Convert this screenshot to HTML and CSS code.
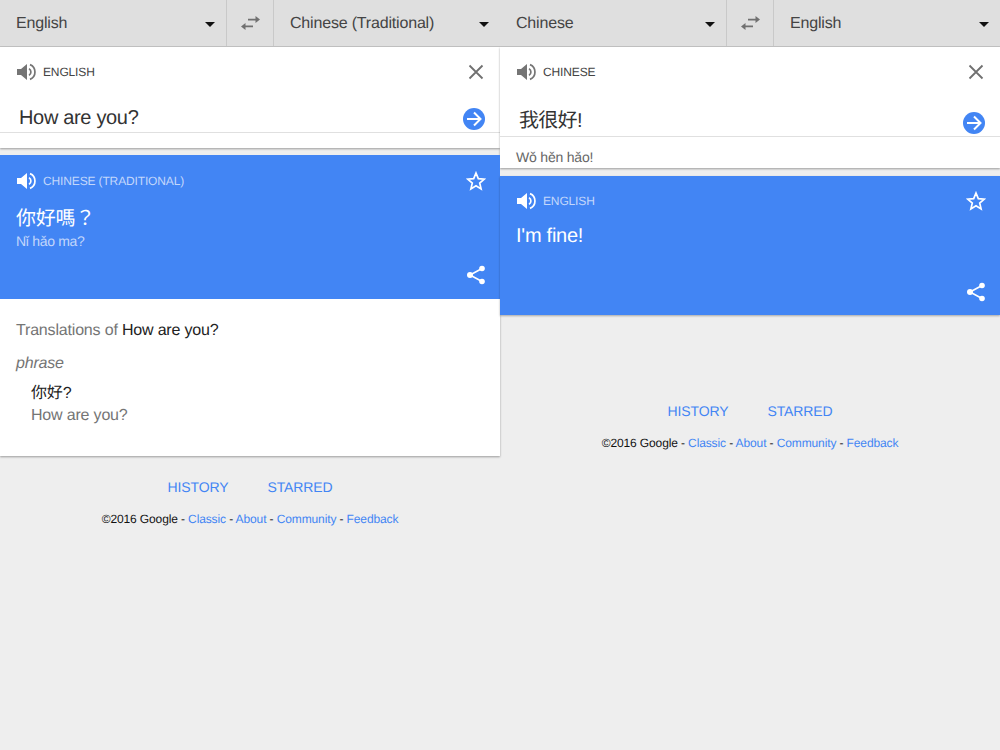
FILE: index.html
```html
<!DOCTYPE html>
<html lang="en">
<head>
  <meta charset="UTF-8">
  <title>Google Translate</title>
  <link rel="stylesheet" href="styles.css">
</head>
<body>
  <svg class="icon-defs" width="0" height="0">
    <symbol id="i-speaker" viewBox="0 0 20 20">
      <path fill="currentColor" d="M1 7h4l6-5v16l-6-5H1z"/>
      <path fill="none" stroke="currentColor" stroke-width="1.7" d="M13 6.600a4 4 0 0 1 0 6.800M14 2.600a8 8 0 0 1 0 14.800"/>
    </symbol>
    <symbol id="i-swap" viewBox="0 0 19 14">
      <path fill="currentColor" d="M7 2.700h7.500V0L19 3.500 14.500 7V4.500H7zM12 9.500H4.500V7L0 10.500 4.500 14v-2.700H12z"/>
    </symbol>
    <symbol id="i-close" viewBox="0 0 16 16">
      <path fill="none" stroke="currentColor" stroke-width="1.8" d="M1.500 1.500l13 13M14.500 1.500l-13 13"/>
    </symbol>
    <symbol id="i-go" viewBox="0 0 22 22">
      <circle cx="11" cy="11" r="11" fill="#4285f4"/>
      <path fill="none" stroke="#fff" stroke-width="2" d="M4 11h13M11 4.500l6.500 6.500-6.500 6.500"/>
    </symbol>
    <symbol id="i-star" viewBox="0 0 20 20">
      <path fill="none" stroke="currentColor" stroke-width="1.7" stroke-linejoin="miter" d="M10 2l2.300 5.600 6 .5-4.600 3.900 1.400 5.900L10 14.800l-5.100 3.100 1.400-5.900L1.700 8.100l6-.5z"/>
    </symbol>
    <symbol id="i-share" viewBox="0 0 20 20">
      <path fill="none" stroke="currentColor" stroke-width="1.6" d="M16 3.500L4 10l12 6.500"/>
      <circle cx="16" cy="3.500" r="2.800" fill="currentColor"/>
      <circle cx="4" cy="10" r="3" fill="currentColor"/>
      <circle cx="16" cy="16.500" r="2.800" fill="currentColor"/>
    </symbol>
  </svg>

  <div class="screens">
    <!-- left screen -->
    <section class="screen">
      <div class="lang-bar">
        <div class="lang-select"><span>English</span><i class="caret"></i></div>
        <div class="swap"><svg class="swap-icon"><use href="#i-swap"/></svg></div>
        <div class="lang-select"><span>Chinese (Traditional)</span><i class="caret"></i></div>
      </div>

      <div class="input-card">
        <div class="card-head">
          <svg class="speaker"><use href="#i-speaker"/></svg>
          <span class="lang-label">ENGLISH</span>
          <svg class="close"><use href="#i-close"/></svg>
        </div>
        <div class="input-row">
          <span class="input-text">How are you?</span>
          <svg class="go"><use href="#i-go"/></svg>
        </div>
        <div class="input-pad"></div>
      </div>

      <div class="result-card result-left">
        <div class="card-head">
          <svg class="speaker"><use href="#i-speaker"/></svg>
          <span class="lang-label">CHINESE (TRADITIONAL)</span>
          <svg class="star"><use href="#i-star"/></svg>
        </div>
        <div class="result-text">你好嗎？</div>
        <div class="result-roman">Nǐ hǎo ma?</div>
        <svg class="share"><use href="#i-share"/></svg>
      </div>

      <div class="dict-card">
        <div class="dict-title">Translations of <b>How are you?</b></div>
        <div class="dict-pos">phrase</div>
        <div class="dict-word">你好?</div>
        <div class="dict-gloss">How are you?</div>
      </div>

      <div class="links links-left">
        <a href="#">HISTORY</a>
        <a href="#">STARRED</a>
      </div>
      <div class="legal">©2016 Google - <a href="#">Classic</a> - <a href="#">About</a> - <a href="#">Community</a> - <a href="#">Feedback</a></div>
    </section>

    <!-- right screen -->
    <section class="screen">
      <div class="lang-bar">
        <div class="lang-select"><span>Chinese</span><i class="caret"></i></div>
        <div class="swap"><svg class="swap-icon"><use href="#i-swap"/></svg></div>
        <div class="lang-select"><span>English</span><i class="caret"></i></div>
      </div>

      <div class="input-card">
        <div class="card-head">
          <svg class="speaker"><use href="#i-speaker"/></svg>
          <span class="lang-label">CHINESE</span>
          <svg class="close"><use href="#i-close"/></svg>
        </div>
        <div class="input-row input-row-cjk">
          <span class="input-text">我很好!</span>
          <svg class="go"><use href="#i-go"/></svg>
        </div>
        <div class="input-roman">Wǒ hěn hǎo!</div>
      </div>

      <div class="result-card result-right">
        <div class="card-head">
          <svg class="speaker"><use href="#i-speaker"/></svg>
          <span class="lang-label">ENGLISH</span>
          <svg class="star"><use href="#i-star"/></svg>
        </div>
        <div class="result-text">I'm fine!</div>
        <svg class="share"><use href="#i-share"/></svg>
      </div>

      <div class="links links-right">
        <a href="#">HISTORY</a>
        <a href="#">STARRED</a>
      </div>
      <div class="legal">©2016 Google - <a href="#">Classic</a> - <a href="#">About</a> - <a href="#">Community</a> - <a href="#">Feedback</a></div>
    </section>
  </div>
</body>
</html>
```

FILE: styles.css
```css
* {
  box-sizing: border-box;
}

body {
  margin: 0;
  height: 750px;
  overflow: hidden;
  background-color: #eeeeee;
  font-family: "Liberation Sans", "Noto Sans CJK TC", sans-serif;
  text-rendering: geometricPrecision;
  color: #222;
}

a {
  color: #4285f4;
  text-decoration: none;
}

.icon-defs {
  position: absolute;
}

.screens {
  display: flex;
}

.screen {
  width: 500px;
}

/* language bar */
.lang-bar {
  display: flex;
  height: 47px;
  background-color: #dfdfdf;
  border-bottom: 1px solid #c4c4c4;
}

.lang-select {
  flex: 1;
  display: flex;
  align-items: center;
  justify-content: space-between;
  padding: 0 11px 0 16px;
  font-size: 16px;
  letter-spacing: -0.18px;
  color: #444;
}

.lang-select span {
  margin-top: 2px;
}

.caret {
  width: 0;
  height: 0;
  border-left: 5px solid transparent;
  border-right: 5px solid transparent;
  border-top: 5px solid #111;
  margin-top: 2px;
}

.swap {
  width: 48px;
  display: flex;
  align-items: center;
  justify-content: center;
  border-left: 1px solid #c9c9c9;
  border-right: 1px solid #c9c9c9;
}

.swap-icon {
  width: 19px;
  height: 14px;
  color: #707070;
}

/* cards */
.card-head {
  display: flex;
  align-items: center;
  height: 20px;
  padding-left: 16px;
  padding-right: 14px;
}

.speaker {
  width: 20px;
  height: 20px;
  color: #757575;
  margin-right: 7px;
}

.lang-label {
  flex: 1;
  font-size: 12px;
  letter-spacing: -0.14px;
  color: #444;
}

.close {
  width: 16px;
  height: 16px;
  color: #707070;
  margin-right: 2px;
}

.input-card {
  background-color: #fff;
  padding-top: 15px;
  box-shadow: 0 1px 2px rgba(0, 0, 0, 0.35);
}

.input-row {
  display: flex;
  align-items: flex-end;
  justify-content: space-between;
  height: 51px;
  padding: 0 15px 2px 19px;
  border-bottom: 1px solid #e0e0e0;
}

.input-text {
  position: relative;
  top: 1px;
  font-size: 20px;
  line-height: 26px;
  letter-spacing: -0.33px;
  color: #333;
}

.input-row-cjk .input-text {
  top: 0;
  letter-spacing: -0.7px;
}

.go {
  width: 22px;
  height: 22px;
}

.input-row-cjk {
  height: 55px;
}

.input-pad {
  height: 15px;
}

.input-roman {
  height: 31px;
  padding: 12px 16px 0;
  font-size: 14px;
  line-height: 16px;
  letter-spacing: -0.2px;
  color: #666;
}

.result-card {
  position: relative;
  background-color: #4285f4;
  color: #fff;
  padding-top: 16px;
  box-shadow: 0 1px 2px rgba(0, 0, 0, 0.3);
}

.result-left {
  height: 144px;
  margin-top: 7px;
  box-shadow: none;
}

.result-right {
  height: 139px;
  margin-top: 8px;
  padding-top: 15px;
}

.result-card .speaker {
  color: #fff;
}

.result-card .lang-label {
  color: #c3d7fb;
}

.star {
  width: 20px;
  height: 20px;
  color: #fff;
}

.result-text {
  margin-top: 15px;
  padding-left: 16px;
  font-size: 20px;
  line-height: 26px;
  letter-spacing: -0.25px;
}

.result-right .result-text {
  margin-top: 12px;
}

.result-roman {
  padding-left: 16px;
  font-size: 14px;
  line-height: 18px;
  letter-spacing: -0.3px;
  color: #c3d7fb;
}

.share {
  position: absolute;
  right: 14px;
  bottom: 14px;
  width: 20px;
  height: 20px;
  color: #fff;
}

.result-right .share {
  bottom: 13px;
}

/* dictionary */
.dict-card {
  height: 157px;
  background-color: #fff;
  padding: 22px 16px 0;
  box-shadow: 0 1px 2px rgba(0, 0, 0, 0.35);
  font-size: 16px;
  line-height: 20px;
  letter-spacing: -0.18px;
  color: #757575;
}

.dict-title b {
  font-weight: normal;
  color: #222;
}

.dict-pos {
  margin-top: 13px;
  font-style: italic;
}

.dict-word {
  margin-top: 9px;
  padding-left: 15px;
  line-height: 22px;
  color: #222;
}

.dict-gloss {
  padding-left: 15px;
  line-height: 22px;
}

/* footer */
.links {
  display: flex;
  justify-content: center;
  gap: 39px;
  font-size: 14px;
  line-height: 18px;
  letter-spacing: -0.1px;
}

.links-left {
  margin-top: 22px;
}

.links-right {
  margin-top: 87px;
}

.legal {
  margin-top: 15px;
  text-align: center;
  font-size: 12px;
  line-height: 16px;
  letter-spacing: -0.12px;
  color: #111;
}
```
